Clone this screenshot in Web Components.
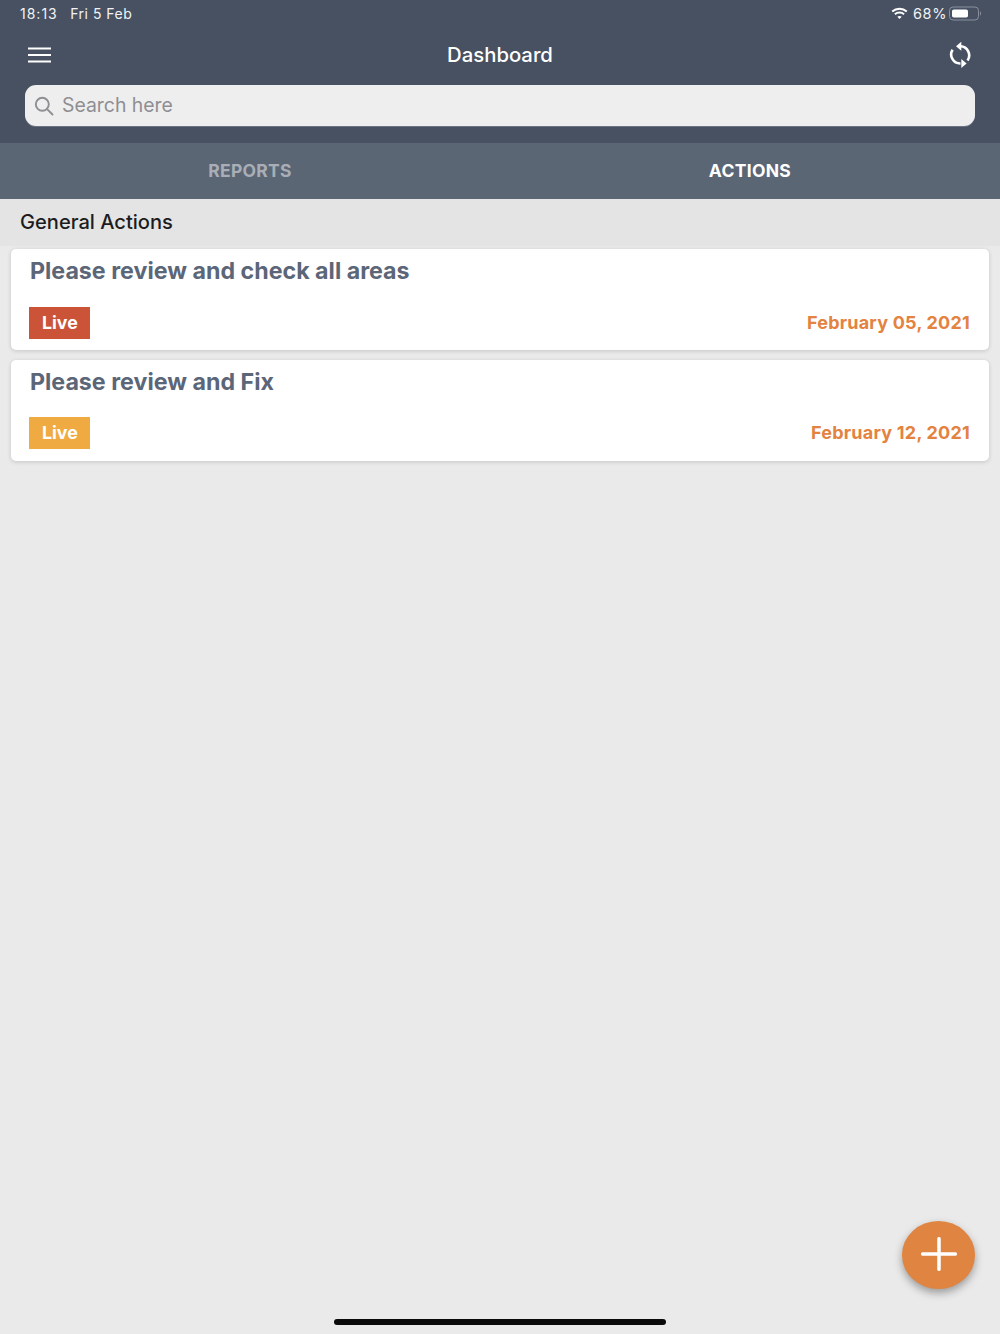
<!DOCTYPE html>
<html lang="en"><head><meta charset="utf-8"><title>Dashboard</title>
<style>
html,body{margin:0;height:100%}
body{font-family:Inter,"Liberation Sans",sans-serif;background:#eaeaea}
</style></head><body>
<app-shell>
  <app-header slot="header"></app-header>
  <app-tabs slot="tabs"></app-tabs>
  <section-title>General Actions</section-title>
  <action-list>
    <action-card title-text="Please review and check all areas" color="#cb5338" date="February 05, 2021"></action-card>
    <action-card title-text="Please review and Fix" color="#efab41" date="February 12, 2021"></action-card>
  </action-list>
  <fab-add></fab-add>
  <home-bar></home-bar>
</app-shell>
<script>
function def(name, html, init){
  customElements.define(name, class extends HTMLElement{
    constructor(){super();this.attachShadow({mode:'open'}).innerHTML=html;}
    connectedCallback(){ if(init) init(this); }
  });
}
def('app-shell',`<style>:host{display:block;position:relative;width:1000px;height:1334px;overflow:hidden}</style><slot name="header"></slot><slot name="tabs"></slot><slot></slot>`);

def('status-bar',`<style>
:host{display:flex;justify-content:space-between;align-items:center;height:27px;padding:0 19px 1px 20px;box-sizing:border-box;color:#f1f3f5;font-size:14px;letter-spacing:.5px}
.l,.r{display:flex;align-items:center}
.time{letter-spacing:1px;margin-right:12.500px}
.r svg{display:block}
.pct{margin:0 2px 0 5px;font-size:14.500px;letter-spacing:.62px}
</style>
<div class="l"><span class="time">18:13</span><span>Fri 5 Feb</span></div>
<div class="r">
<svg width="17" height="13" viewBox="0 0 17 13"><g fill="none" stroke="#fff" stroke-width="2"><path d="M1.2 4.6C5.4 .9 11.6 .9 15.8 4.6"/><path d="M3.9 7.3C6.5 5 10.5 5 13.1 7.3"/></g><path d="M6.3 9.7c1.3-1.1 3.1-1.1 4.4 0L8.5 12z" fill="#fff"/></svg>
<span class="pct">68%</span>
<svg width="32" height="15" viewBox="0 0 32 15"><rect x=".5" y="1" width="29" height="13" rx="3.6" fill="none" stroke="#8a919c"/><rect x="3" y="3.500" width="16" height="8" rx="1.800" fill="#fff"/><path d="M31 5.500c.8.3 1 1.200 1 2s-.2 1.700-1 2z" fill="#8a919c"/></svg>
</div>`);

def('search-box',`<style>
:host{display:flex;align-items:center;height:41px;margin:0 25px;background:#eeeeee;border-radius:11px;color:#8e8e93;font-size:19.400px;line-height:39px;box-shadow:0 1px 0 rgba(255,255,255,.2)}
svg{margin:0 8.500px 0 8.500px;display:block}
span{padding-bottom:1px}
</style>
<svg width="20" height="20" viewBox="0 0 20 20" fill="none" stroke="#8e8e93" stroke-width="1.9" stroke-linecap="round"><circle cx="8.300" cy="8.300" r="6.500"/><path d="M13.100 13.100L18.500 18.500"/></svg>
<span>Search here</span>`);

def('app-header',`<style>
:host{display:block;height:143px;background:#475162}
.nav{display:flex;align-items:center;justify-content:space-between;height:58px;padding:0 28px 3px 28px;box-sizing:border-box;color:#fff}
h1{margin:0;font-size:20.300px;font-weight:500;color:#fff}
svg{display:block}
</style>
<status-bar></status-bar>
<div class="nav">
<svg width="23" height="16" viewBox="0 0 23 16" stroke="#fff" stroke-width="2.200"><path d="M0 1.500H23M0 8H23M0 14.500H23"/></svg>
<h1>Dashboard</h1>
<svg width="23" height="28" viewBox="0 0 23 28" fill="none" stroke="#fff" stroke-width="2.600"><path d="M11.500 5.300A9 9 0 0 1 18.500 19.500"/><path d="M11.500 22.500A9 9 0 0 1 3.600 8.700"/><path d="M7 5.300L12.300 .8V9.800z" fill="#fff" stroke="none"/><path d="M17.600 22.500L12.300 18V27z" fill="#fff" stroke="none"/></svg>
</div>
<search-box></search-box>`);

def('app-tabs',`<style>
:host{display:flex;height:56px;background:#5b6675;font-size:17.500px;font-weight:700;letter-spacing:.3px}
div{flex:1;display:flex;align-items:center;justify-content:center;padding-bottom:1px}
.off{color:#a9aeb6}.on{color:#fff}
</style><div class="off">REPORTS</div><div class="on">ACTIONS</div>`);

def('section-title',`<style>
:host{display:flex;align-items:center;height:47px;padding:0 20px 2px;box-sizing:border-box;background:#e4e4e4;color:#1c1c1e;font-size:20.100px;font-weight:500}
</style><slot></slot>`);

def('action-list',`<style>:host{display:flex;flex-direction:column;gap:10px;padding:3px 11px 0}</style><slot></slot>`);

def('action-card',`<style>
:host{display:flex;flex-direction:column;justify-content:space-between;height:101px;box-sizing:border-box;padding:8px 19px 11px 18.400px;background:#fff;border-radius:5px;box-shadow:0 1px 4px rgba(0,0,0,.16)}
:host(:last-child){padding-bottom:11.600px}
h2{margin:0 0 0 .6px;font-size:23.220px;line-height:28px;font-weight:700;color:#5b6678}
.row{display:flex;justify-content:space-between;align-items:center}
.badge{width:61px;height:32px;display:flex;align-items:center;justify-content:center;color:#fff;font-size:17.800px;font-weight:700;padding-bottom:1px;box-sizing:border-box}
.date{color:#e3833f;font-size:18px;letter-spacing:.22px;font-weight:700;padding-bottom:1px}
</style><h2></h2><div class="row"><div class="badge">Live</div><div class="date"></div></div>`, el=>{
  const s=el.shadowRoot;
  s.querySelector('h2').textContent=el.getAttribute('title-text');
  s.querySelector('.badge').style.background=el.getAttribute('color');
  s.querySelector('.date').textContent=el.getAttribute('date');
});

def('fab-add',`<style>
:host{position:absolute;left:902px;top:1221px;width:73px;height:67.500px;border-radius:50%;background:#e08441;box-shadow:0 4px 9px rgba(0,0,0,.34);display:flex;align-items:center;justify-content:center}
svg{display:block;margin-bottom:1px}
</style><svg width="36" height="34" viewBox="0 0 36 34" stroke="#fff" stroke-width="3.500" stroke-linecap="round"><path d="M1.700 17H34.300M18 1.700V32.300"/></svg>`);

def('home-bar',`<style>
:host{position:absolute;left:334px;top:1319px;width:332px;height:6px;border-radius:3px;background:#0a0a0a}
</style>`);
</script>
</body></html>
